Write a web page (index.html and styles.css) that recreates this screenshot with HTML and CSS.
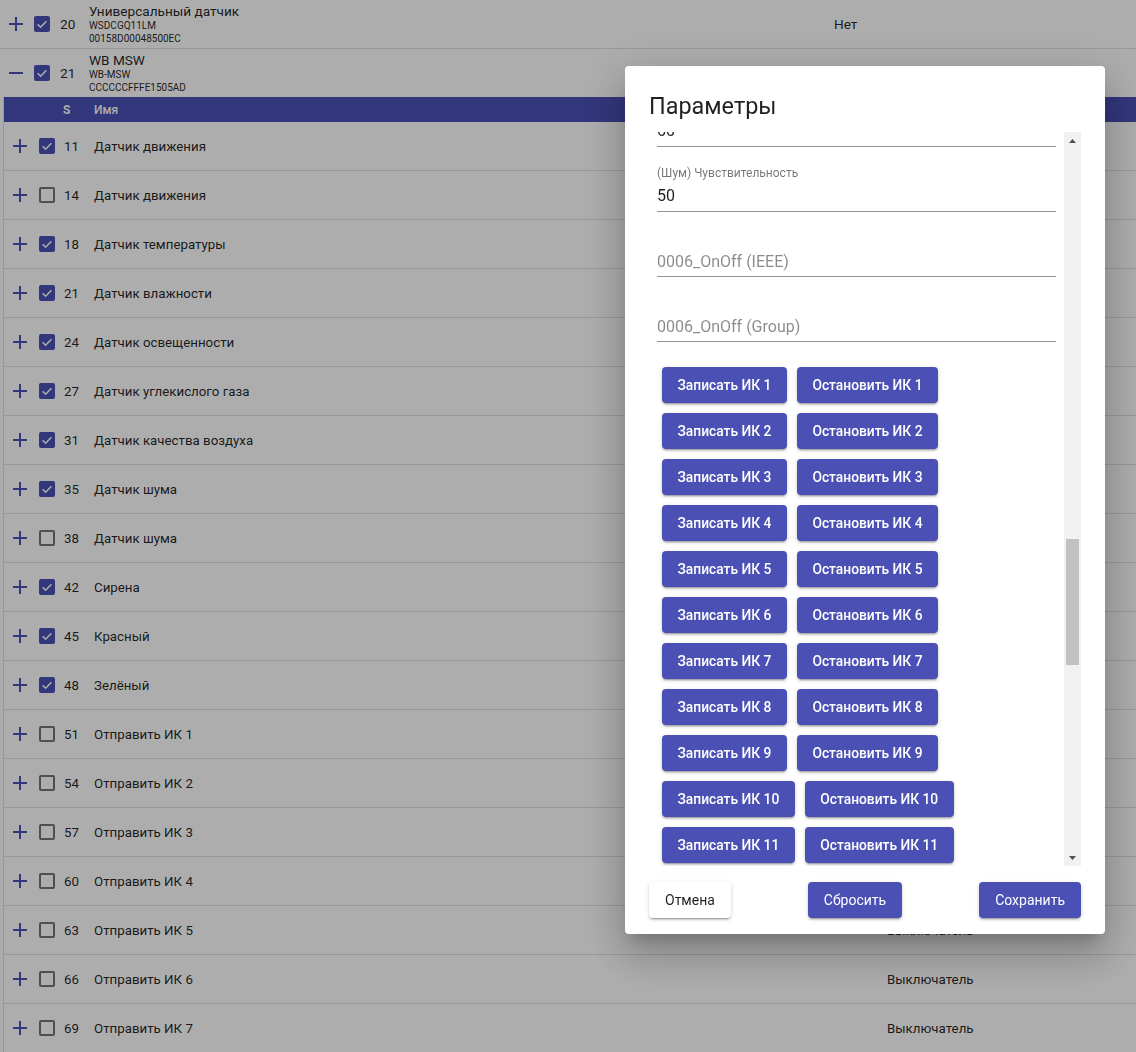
FILE: index.html
```html
<!DOCTYPE html>
<html lang="ru">
<head>
<meta charset="utf-8">
<title>Устройства</title>
<link rel="stylesheet" href="styles.css">
</head>
<body>
<main class="page">
  <div class="dev-row">
    <span class="toggle"><svg viewBox="0 0 14 14" width="14" height="14"><path d="M7 0v14M0 7h14"/></svg></span>
    <span class="cb on"><svg viewBox="0 0 16 16" width="16" height="16"><path d="M3.6 8.2l3 3 5.8-6"/></svg></span>
    <span class="num">20</span>
    <div class="dev-name">
      <div class="dev-title">Универсальный датчик</div>
      <div class="dev-sub">WSDCGQ11LM</div>
      <div class="dev-sub">00158D00048500EC</div>
    </div>
    <div class="dev-val">Нет</div>
  </div>
  <div class="dev-row last">
    <span class="toggle"><svg viewBox="0 0 14 14" width="14" height="14"><path d="M0 7h14"/></svg></span>
    <span class="cb on"><svg viewBox="0 0 16 16" width="16" height="16"><path d="M3.6 8.2l3 3 5.8-6"/></svg></span>
    <span class="num">21</span>
    <div class="dev-name">
      <div class="dev-title">WB MSW</div>
      <div class="dev-sub">WB-MSW</div>
      <div class="dev-sub">CCCCCCFFFE1505AD</div>
    </div>
    <div class="dev-val"></div>
  </div>

  <section class="subtable">
    <div class="sub-head"><span class="h-s">S</span><span class="h-name">Имя</span></div>

    <div class="sub-row"><span class="toggle"><svg viewBox="0 0 14 14" width="14" height="14"><path d="M7 0v14M0 7h14"/></svg></span><span class="cb on"><svg viewBox="0 0 16 16" width="16" height="16"><path d="M3.6 8.2l3 3 5.8-6"/></svg></span><span class="num">11</span><span class="sub-name">Датчик движения</span><span class="sub-val"></span></div>
    <div class="sub-row"><span class="toggle"><svg viewBox="0 0 14 14" width="14" height="14"><path d="M7 0v14M0 7h14"/></svg></span><span class="cb off"></span><span class="num">14</span><span class="sub-name">Датчик движения</span><span class="sub-val"></span></div>
    <div class="sub-row"><span class="toggle"><svg viewBox="0 0 14 14" width="14" height="14"><path d="M7 0v14M0 7h14"/></svg></span><span class="cb on"><svg viewBox="0 0 16 16" width="16" height="16"><path d="M3.6 8.2l3 3 5.8-6"/></svg></span><span class="num">18</span><span class="sub-name">Датчик температуры</span><span class="sub-val"></span></div>
    <div class="sub-row"><span class="toggle"><svg viewBox="0 0 14 14" width="14" height="14"><path d="M7 0v14M0 7h14"/></svg></span><span class="cb on"><svg viewBox="0 0 16 16" width="16" height="16"><path d="M3.6 8.2l3 3 5.8-6"/></svg></span><span class="num">21</span><span class="sub-name">Датчик влажности</span><span class="sub-val"></span></div>
    <div class="sub-row"><span class="toggle"><svg viewBox="0 0 14 14" width="14" height="14"><path d="M7 0v14M0 7h14"/></svg></span><span class="cb on"><svg viewBox="0 0 16 16" width="16" height="16"><path d="M3.6 8.2l3 3 5.8-6"/></svg></span><span class="num">24</span><span class="sub-name">Датчик освещенности</span><span class="sub-val"></span></div>
    <div class="sub-row"><span class="toggle"><svg viewBox="0 0 14 14" width="14" height="14"><path d="M7 0v14M0 7h14"/></svg></span><span class="cb on"><svg viewBox="0 0 16 16" width="16" height="16"><path d="M3.6 8.2l3 3 5.8-6"/></svg></span><span class="num">27</span><span class="sub-name">Датчик углекислого газа</span><span class="sub-val"></span></div>
    <div class="sub-row"><span class="toggle"><svg viewBox="0 0 14 14" width="14" height="14"><path d="M7 0v14M0 7h14"/></svg></span><span class="cb on"><svg viewBox="0 0 16 16" width="16" height="16"><path d="M3.6 8.2l3 3 5.8-6"/></svg></span><span class="num">31</span><span class="sub-name">Датчик качества воздуха</span><span class="sub-val"></span></div>
    <div class="sub-row"><span class="toggle"><svg viewBox="0 0 14 14" width="14" height="14"><path d="M7 0v14M0 7h14"/></svg></span><span class="cb on"><svg viewBox="0 0 16 16" width="16" height="16"><path d="M3.6 8.2l3 3 5.8-6"/></svg></span><span class="num">35</span><span class="sub-name">Датчик шума</span><span class="sub-val"></span></div>
    <div class="sub-row"><span class="toggle"><svg viewBox="0 0 14 14" width="14" height="14"><path d="M7 0v14M0 7h14"/></svg></span><span class="cb off"></span><span class="num">38</span><span class="sub-name">Датчик шума</span><span class="sub-val"></span></div>
    <div class="sub-row"><span class="toggle"><svg viewBox="0 0 14 14" width="14" height="14"><path d="M7 0v14M0 7h14"/></svg></span><span class="cb on"><svg viewBox="0 0 16 16" width="16" height="16"><path d="M3.6 8.2l3 3 5.8-6"/></svg></span><span class="num">42</span><span class="sub-name">Сирена</span><span class="sub-val"></span></div>
    <div class="sub-row"><span class="toggle"><svg viewBox="0 0 14 14" width="14" height="14"><path d="M7 0v14M0 7h14"/></svg></span><span class="cb on"><svg viewBox="0 0 16 16" width="16" height="16"><path d="M3.6 8.2l3 3 5.8-6"/></svg></span><span class="num">45</span><span class="sub-name">Красный</span><span class="sub-val"></span></div>
    <div class="sub-row"><span class="toggle"><svg viewBox="0 0 14 14" width="14" height="14"><path d="M7 0v14M0 7h14"/></svg></span><span class="cb on"><svg viewBox="0 0 16 16" width="16" height="16"><path d="M3.6 8.2l3 3 5.8-6"/></svg></span><span class="num">48</span><span class="sub-name">Зелёный</span><span class="sub-val"></span></div>
    <div class="sub-row"><span class="toggle"><svg viewBox="0 0 14 14" width="14" height="14"><path d="M7 0v14M0 7h14"/></svg></span><span class="cb off"></span><span class="num">51</span><span class="sub-name">Отправить ИК 1</span><span class="sub-val">Выключатель</span></div>
    <div class="sub-row"><span class="toggle"><svg viewBox="0 0 14 14" width="14" height="14"><path d="M7 0v14M0 7h14"/></svg></span><span class="cb off"></span><span class="num">54</span><span class="sub-name">Отправить ИК 2</span><span class="sub-val">Выключатель</span></div>
    <div class="sub-row"><span class="toggle"><svg viewBox="0 0 14 14" width="14" height="14"><path d="M7 0v14M0 7h14"/></svg></span><span class="cb off"></span><span class="num">57</span><span class="sub-name">Отправить ИК 3</span><span class="sub-val">Выключатель</span></div>
    <div class="sub-row"><span class="toggle"><svg viewBox="0 0 14 14" width="14" height="14"><path d="M7 0v14M0 7h14"/></svg></span><span class="cb off"></span><span class="num">60</span><span class="sub-name">Отправить ИК 4</span><span class="sub-val">Выключатель</span></div>
    <div class="sub-row"><span class="toggle"><svg viewBox="0 0 14 14" width="14" height="14"><path d="M7 0v14M0 7h14"/></svg></span><span class="cb off"></span><span class="num">63</span><span class="sub-name">Отправить ИК 5</span><span class="sub-val">Выключатель</span></div>
    <div class="sub-row"><span class="toggle"><svg viewBox="0 0 14 14" width="14" height="14"><path d="M7 0v14M0 7h14"/></svg></span><span class="cb off"></span><span class="num">66</span><span class="sub-name">Отправить ИК 6</span><span class="sub-val">Выключатель</span></div>
    <div class="sub-row"><span class="toggle"><svg viewBox="0 0 14 14" width="14" height="14"><path d="M7 0v14M0 7h14"/></svg></span><span class="cb off"></span><span class="num">69</span><span class="sub-name">Отправить ИК 7</span><span class="sub-val">Выключатель</span></div>
  </section>
</main>

<div class="overlay"></div>

<div class="dialog" role="dialog" aria-label="Параметры">
  <h2 class="dlg-title">Параметры</h2>
  <div class="dlg-body">
    <div class="dlg-scroll">
      <div class="dlg-content">
        <div class="field"><span class="f-label"></span><div class="f-value">60</div></div>
        <div class="field"><span class="f-label">(Шум) Чувствительность</span><div class="f-value">50</div></div>
        <div class="field"><span class="f-label"></span><div class="f-value ph">0006_OnOff (IEEE)</div></div>
        <div class="field"><span class="f-label"></span><div class="f-value ph">0006_OnOff (Group)</div></div>
        <div class="ir-grid">
          <div class="ir-row"><button class="btn">Записать ИК 1</button><button class="btn">Остановить ИК 1</button></div>
          <div class="ir-row"><button class="btn">Записать ИК 2</button><button class="btn">Остановить ИК 2</button></div>
          <div class="ir-row"><button class="btn">Записать ИК 3</button><button class="btn">Остановить ИК 3</button></div>
          <div class="ir-row"><button class="btn">Записать ИК 4</button><button class="btn">Остановить ИК 4</button></div>
          <div class="ir-row"><button class="btn">Записать ИК 5</button><button class="btn">Остановить ИК 5</button></div>
          <div class="ir-row"><button class="btn">Записать ИК 6</button><button class="btn">Остановить ИК 6</button></div>
          <div class="ir-row"><button class="btn">Записать ИК 7</button><button class="btn">Остановить ИК 7</button></div>
          <div class="ir-row"><button class="btn">Записать ИК 8</button><button class="btn">Остановить ИК 8</button></div>
          <div class="ir-row"><button class="btn">Записать ИК 9</button><button class="btn">Остановить ИК 9</button></div>
          <div class="ir-row"><button class="btn">Записать ИК 10</button><button class="btn">Остановить ИК 10</button></div>
          <div class="ir-row"><button class="btn">Записать ИК 11</button><button class="btn">Остановить ИК 11</button></div>
        </div>
      </div>
    </div>
    <div class="vscroll" aria-hidden="true">
      <span class="arrow"><svg viewBox="0 0 7 4" width="7" height="4"><polygon points="0,4 3.5,0 7,4"/></svg></span>
      <div class="track"><div class="thumb" style="margin-top:390px;height:126px"></div></div>
      <span class="arrow"><svg viewBox="0 0 7 4" width="7" height="4"><polygon points="0,0 7,0 3.5,4"/></svg></span>
    </div>
  </div>
  <div class="dlg-actions">
    <button class="act plain">Отмена</button>
    <button class="act primary">Сбросить</button>
    <button class="act primary">Сохранить</button>
  </div>
</div>
</body>
</html>
```

FILE: styles.css
```css
html, body {
  margin: 0;
  padding: 0;
  height: 100%;
  overflow: hidden;
}

body {
  font-family: Roboto, "Noto Sans", "Liberation Sans", sans-serif;
  font-size: 14px;
  color: rgba(0, 0, 0, 0.87);
  background: #fff;
}

.page {
  width: 1136px;
}

/* ---------- device rows ---------- */
.dev-row,
.sub-row {
  display: flex;
  align-items: center;
  height: 48px;
  padding-left: 9px;
  border-bottom: 1px solid #e0e0e0;
}

.sub-row {
  font-size: 13.3px;
}

.dev-row.last {
  border-bottom: none;
}

.toggle {
  flex: none;
  width: 14px;
  height: 14px;
  display: flex;
}

.toggle svg path {
  stroke: #4b50b5;
  stroke-width: 2;
  fill: none;
}

.cb {
  flex: none;
  width: 16px;
  height: 16px;
  box-sizing: border-box;
  border-radius: 2px;
  margin-left: 11px;
  display: flex;
  align-items: center;
  justify-content: center;
}

.sub-row .cb {
  margin-left: 12px;
}

.cb.on {
  background: #4b50b5;
}

.cb.on svg path {
  fill: none;
  stroke: #fff;
  stroke-width: 1.6;
}

.cb.off {
  border: 2px solid rgba(0, 0, 0, 0.54);
}

.num {
  flex: none;
  width: 29px;
  margin-left: 10px;
  font-size: 13.6px;
}

.sub-row .num {
  margin-left: 9px;
  width: 30px;
  font-size: 13.3px;
}

.dev-name {
  flex: 1;
  display: flex;
  flex-direction: column;
}

.dev-title {
  font-size: 13.6px;
  line-height: 16px;
}

.dev-sub {
  font-size: 10px;
  line-height: 13px;
}

.dev-val {
  flex: none;
  width: 302px;
  font-size: 13.6px;
}

/* ---------- sub table ---------- */
.subtable {
  margin-left: 3px;
  border-left: 1px solid #e0e0e0;
}

.sub-head {
  display: flex;
  align-items: center;
  height: 25px;
  padding-left: 59px;
  background: #4b50b5;
  color: #fff;
  font-size: 12px;
  font-weight: 700;
}

.h-s {
  width: 31px;
}

.h-name {
  font-weight: 500;
}

.sub-name {
  flex: 1;
}

.sub-val {
  flex: none;
  width: 249px;
}

/* ---------- overlay & dialog ---------- */
.overlay {
  position: fixed;
  inset: 0;
  background: rgba(0, 0, 0, 0.32);
}

.dialog {
  position: fixed;
  left: 625px;
  top: 66px;
  width: 480px;
  height: 868px;
  box-sizing: border-box;
  padding: 24px 24px 16px;
  background: #fff;
  border-radius: 4px;
  display: flex;
  flex-direction: column;
  box-shadow: 0 11px 15px -7px rgba(0, 0, 0, 0.2),
              0 24px 38px 3px rgba(0, 0, 0, 0.14),
              0 9px 46px 8px rgba(0, 0, 0, 0.12);
}

.dlg-title {
  margin: 0 0 10px;
  font-size: 23.4px;
  line-height: 32px;
  font-weight: 400;
  color: rgba(0, 0, 0, 0.87);
}

.dlg-body {
  display: flex;
  height: 734px;
  flex: none;
}

.dlg-scroll {
  flex: 1;
  overflow: hidden;
}

.dlg-content {
  margin-top: -50px;
}

.field {
  margin: 0 8px;
  height: 65px;
  box-sizing: border-box;
  padding-top: 19px;
  border-bottom: 1px solid rgba(0, 0, 0, 0.42);
}

.f-label {
  display: block;
  height: 14px;
  font-size: 12px;
  line-height: 14px;
  color: rgba(0, 0, 0, 0.54);
}

.f-value {
  margin-top: 4px;
  font-size: 16px;
  line-height: 24px;
  color: rgba(0, 0, 0, 0.87);
}

.f-value.ph {
  margin-top: 5px;
  color: rgba(0, 0, 0, 0.46);
}

.ir-grid {
  padding: 25px 0 0 8px;
}

.ir-row {
  display: flex;
  margin-bottom: 10px;
}

.btn,
.act {
  height: 36px;
  padding: 0 16px;
  border: 0;
  border-radius: 4px;
  font-family: Roboto, "Noto Sans", "Liberation Sans", sans-serif;
  font-size: 14px;
  line-height: 36px;
  box-shadow: 0 3px 1px -2px rgba(0, 0, 0, 0.2),
              0 2px 2px 0 rgba(0, 0, 0, 0.14),
              0 1px 5px 0 rgba(0, 0, 0, 0.12);
  cursor: pointer;
}

.btn {
  margin: 0 5px;
  padding: 0 15.5px;
  background: #4b50b5;
  color: #fff;
  font-weight: 500;
  font-size: 13.8px;
}

/* fake scrollbar */
.vscroll {
  flex: none;
  width: 17px;
  background: #f1f1f1;
  display: flex;
  flex-direction: column;
}

.arrow {
  height: 17px;
  display: flex;
  align-items: center;
  justify-content: center;
}

.arrow svg polygon {
  fill: #505050;
}

.track {
  flex: 1;
}

.thumb {
  width: 13px;
  margin-left: auto;
  margin-right: auto;
  background: #c1c1c1;
}

.dlg-actions {
  display: flex;
  justify-content: space-between;
  padding-top: 16px;
}

.act {
  font-weight: 400;
}

.act.plain {
  background: #fff;
  color: rgba(0, 0, 0, 0.87);
}

.act.primary {
  background: #4b50b5;
  color: #fff;
}
```
